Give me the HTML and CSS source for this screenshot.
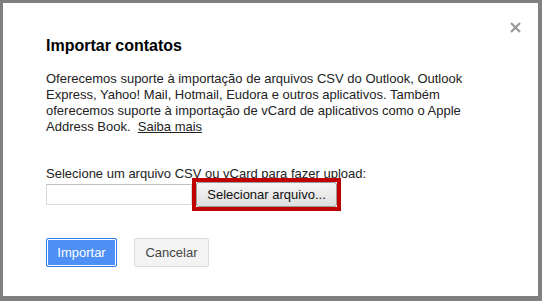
FILE: index.html
```html
<!DOCTYPE html>
<html lang="pt">
<head>
<meta charset="utf-8">
<title>Importar contatos</title>
<link rel="stylesheet" href="styles.css">
</head>
<body>
<div class="dialog">
  <button class="close" aria-label="Fechar">
    <svg width="11" height="11" viewBox="0 0 11 11"><path d="M1 1L10 10M10 1L1 10" stroke="#999" stroke-width="2.2" fill="none"/></svg>
  </button>
  <h1 class="title">Importar contatos</h1>
  <p class="desc">Oferecemos suporte à importação de arquivos CSV do Outlook, Outlook Express, Yahoo! Mail, Hotmail, Eudora e outros aplicativos. Também oferecemos suporte à importação de vCard de aplicativos como o Apple Address Book.&nbsp; <a class="link" href="#">Saiba mais</a></p>
  <div class="upload">
    <div class="label">Selecione um arquivo CSV ou vCard para fazer upload:</div>
    <div class="file-row">
      <div class="file-input"></div>
      <div class="highlight">
        <button class="file-btn">Selecionar arquivo...</button>
      </div>
    </div>
  </div>
  <div class="actions">
    <button class="btn btn-primary">Importar</button>
    <button class="btn btn-default">Cancelar</button>
  </div>
</div>
</body>
</html>
```
FILE: styles.css
```css
html, body {
  margin: 0;
  padding: 0;
}
body {
  background: #808080;
  width: 542px;
  height: 301px;
  box-sizing: border-box;
  padding: 3px 4px 5px 3px;
  font-family: "Liberation Sans", Arial, sans-serif;
  color: #222;
  overflow: hidden;
}
.dialog {
  position: relative;
  background: #fff;
  height: 100%;
  box-sizing: border-box;
  padding: 33px 42px 0 43px;
}
.close {
  position: absolute;
  top: 19px;
  right: 17px;
  width: 11px;
  height: 11px;
  padding: 0;
  border: 0;
  background: none;
  display: block;
}
.close svg { display: block; }
.title {
  margin: 0;
  font-size: 16px;
  line-height: 20px;
  font-weight: bold;
  color: #000;
}
.desc {
  margin: 15px 0 0;
  font-size: 13px;
  line-height: 16px;
  color: #222;
}
.link {
  color: #222;
  text-decoration: underline;
}
.upload {
  margin-top: 31px;
  font-size: 13px;
}
.label {
  line-height: 16px;
  color: #222;
}
.file-row {
  display: flex;
  align-items: center;
}
.file-input {
  width: 144px;
  height: 19px;
  border: 1px solid #d9d9d9;
  border-top-color: #c0c0c0;
  background: #fff;
}
.highlight {
  margin: -4px 0;
  border: 4px solid #c00000;
  display: flex;
}
.file-btn {
  width: 141px;
  height: 25px;
  padding: 0;
  border: 1px solid #9a9a9a;
  border-radius: 3px;
  background: linear-gradient(#f6f6f6, #dedede);
  font-family: "Liberation Sans", Arial, sans-serif;
  font-size: 13px;
  color: #111;
}
.actions {
  margin-top: 31px;
  display: flex;
  gap: 17px;
}
.btn {
  height: 29px;
  padding: 0 10px;
  border-radius: 2px;
  font-family: "Liberation Sans", Arial, sans-serif;
  font-size: 13px;
}
.btn-primary {
  width: 71px;
  background: #4d8ff5;
  border: 1px solid #3079ed;
  box-shadow: inset 0 0 0 1px #fff;
  color: #fff;
}
.btn-default {
  width: 75px;
  background: #f3f3f3;
  border: 1px solid #dcdcdc;
  color: #444;
}
```
